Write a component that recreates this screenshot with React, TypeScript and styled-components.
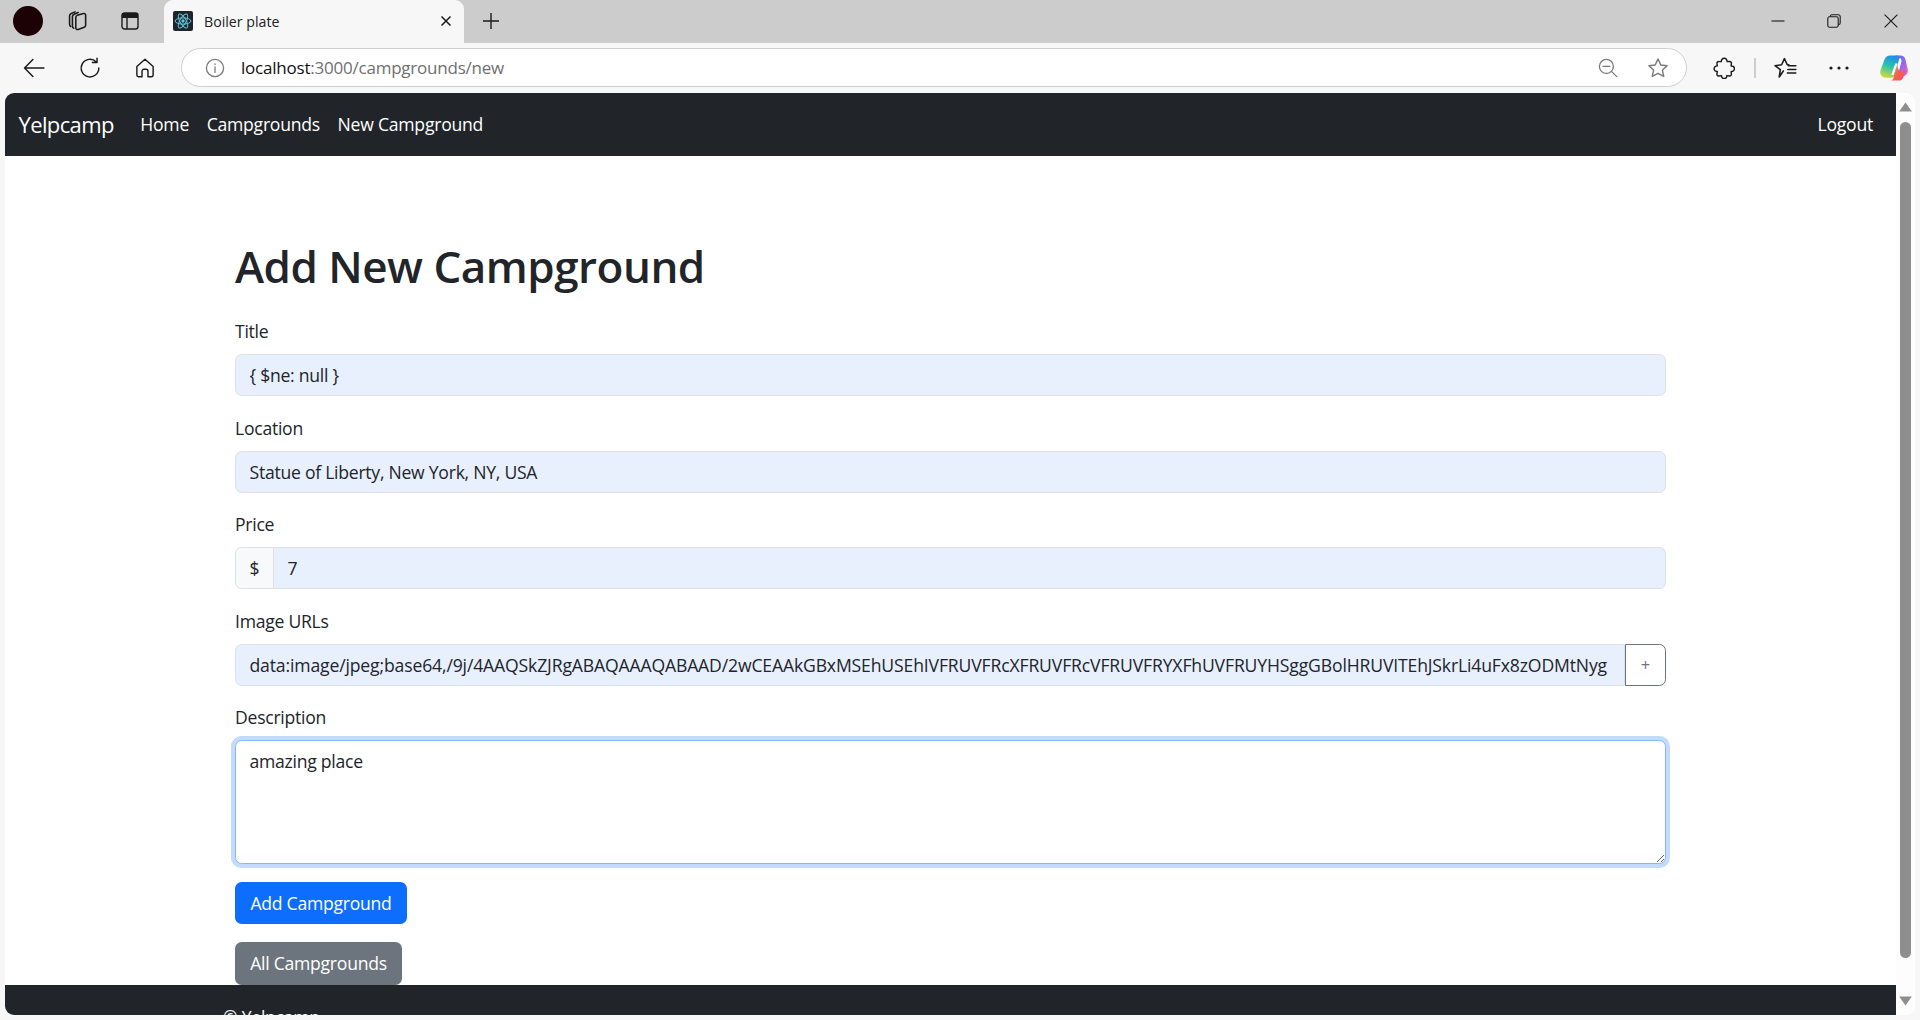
import React from "react";
import styled, { createGlobalStyle } from "styled-components";

const FONT = `"Open Sans", "Noto Sans", "Liberation Sans", sans-serif`;
const LONG_URL =
  "data:image/jpeg;base64,/9j/4AAQSkZJRgABAQAAAQABAAD/2wCEAAkGBxMSEhUSEhIVFRUVFRcXFRUVFRcVFRUVFRYXFhUVFRUYHSggGBolHRUVITEhJSkrLi4uFx8zODMtNyg";

const Global = createGlobalStyle`
  * { box-sizing: border-box; }
  html, body { margin: 0; padding: 0; height: 100%; overflow: hidden; background: #f7f7f7; }
  body { font-family: ${FONT}; }
  #root { height: 100%; }
`;

const Shell = styled.div`
  width: 1920px;
  height: 1020px;
  display: flex;
  flex-direction: column;
  background: #f7f7f7;
  overflow: hidden;
`;

const TabStrip = styled.div`
  height: 43px;
  flex: none;
  display: flex;
  align-items: stretch;
  padding: 0 0 0 2px;
  background: #cccccc;
`;

const Slot = styled.div<{ $w: number }>`
  width: ${(p) => p.$w}px;
  flex: none;
  display: flex;
  align-items: center;
  justify-content: center;
  color: #1a1a1a;
`;

const StripSlot = styled(Slot)`
  padding-bottom: 1px;
`;

const Avatar = styled.div`
  width: 30px;
  height: 30px;
  border-radius: 50%;
  background: #1c0205;
`;

const Tab = styled.div`
  width: 300px;
  margin-left: 4px;
  flex: none;
  display: flex;
  align-items: center;
  padding: 0 12px 1px 9px;
  background: #f7f7f7;
  border-radius: 9px 9px 0 0;
`;

const Favicon = styled.div`
  width: 20px;
  height: 20px;
  flex: none;
  display: flex;
  align-items: center;
  justify-content: center;
  background: #20232a;
  border-radius: 2px;
`;

const TabTitle = styled.span`
  margin-left: 11px;
  flex: 1;
  font-size: 14.2px;
  color: #222;
`;

const WindowControls = styled.div`
  margin-left: auto;
  display: flex;
`;

const Toolbar = styled.div`
  height: 50px;
  flex: none;
  display: flex;
  align-items: stretch;
  padding: 0 1px 0 7px;
  background: #f7f7f7;
`;

const UrlBar = styled.div`
  flex: 1;
  margin: 5px 13px 6px 9px;
  display: flex;
  align-items: center;
  padding: 0 17px 0 23px;
  background: #fff;
  border: 1px solid #cfcfcf;
  border-radius: 20px;
`;

const UrlText = styled.div`
  margin-left: 16px;
  flex: 1;
  font-size: 17px;
  letter-spacing: -0.22px;
  color: #6f6f6f;
  b { font-weight: 400; color: #111; }
`;

const UrlIcon = styled.div<{ $ml?: number }>`
  margin-left: ${(p) => p.$ml ?? 0}px;
  display: flex;
  color: #7a7a7a;
`;

const ToolbarSep = styled.div`
  width: 2px;
  height: 20px;
  margin: auto 5px auto 6px;
  background: #cdcdcd;
`;

const Viewport = styled.div`
  flex: 1;
  min-height: 0;
  margin: 0 5px 5px 5px;
  display: flex;
  border-radius: 9px;
  overflow: hidden;
  background: #fff;
`;

const Page = styled.div`
  flex: 1;
  min-width: 0;
  display: flex;
  flex-direction: column;
  overflow: hidden;
  background: #fff;
  color: #212529;
  font-size: 17.6px;
  line-height: 26.4px;
`;

const Navbar = styled.nav`
  height: 63px;
  flex: none;
  display: flex;
  align-items: center;
  padding: 0 23px 0 13.5px;
  background: #212529;
  color: #fff;
`;

const Brand = styled.a`
  font-size: 22px;
  margin-right: 26.5px;
  letter-spacing: -0.62px;
`;

const NavLink = styled.a<{ $right?: boolean }>`
  margin-left: ${(p) => (p.$right ? "auto" : "0")};
  margin-right: ${(p) => (p.$right ? "0" : "17.6px")};
  letter-spacing: -0.24px;
`;

const Main = styled.main`
  flex: none;
  padding: 84px 230px 0;
`;

const Heading = styled.h1`
  margin: 0 0 25px;
  font-size: 44px;
  line-height: 53px;
  font-weight: 600;
  letter-spacing: -0.5px;
`;

const Field = styled.div<{ $mb?: number }>`
  margin-bottom: ${(p) => p.$mb ?? 18.3}px;
`;

const Label = styled.label`
  display: block;
  margin-bottom: 9.8px;
  letter-spacing: -0.26px;
`;

const Input = styled.input`
  display: block;
  flex: 1;
  min-width: 0;
  width: 100%;
  height: 42px;
  padding: 0 13.5px;
  font: inherit;
  letter-spacing: -0.26px;
  color: #212529;
  background: #e8f0fe;
  border: 1px solid #dee2e6;
  border-radius: 6.6px;
  outline: none;
`;

const Group = styled.div`
  display: flex;
`;

const GroupText = styled.span`
  width: 39px;
  flex: none;
  display: flex;
  align-items: center;
  justify-content: center;
  background: #f8f9fa;
  border: 1px solid #dee2e6;
  border-radius: 6.6px 0 0 6.6px;
`;

const PriceInput = styled(Input)`
  border-left: 0;
  border-radius: 0 6.6px 6.6px 0;
`;

const UrlInput = styled(Input)`
  border-radius: 6.6px 0 0 6.6px;
  letter-spacing: -0.15px;
`;

const AddUrlButton = styled.button`
  width: 41px;
  flex: none;
  padding: 0;
  font-family: inherit;
  font-size: 16.5px;
  color: #6c757d;
  background: #fff;
  border: 1px solid #6c757d;
  border-radius: 0 6.6px 6.6px 0;
`;

const TextArea = styled.textarea`
  display: block;
  width: 100%;
  height: 124px;
  padding: 7px 13.5px;
  font: inherit;
  letter-spacing: -0.26px;
  color: #212529;
  background: #fff;
  border: 1px solid #86b7fe;
  border-radius: 6.6px;
  outline: none;
  box-shadow: 0 0 0 4px #c2dbfe;
  resize: vertical;
`;

const ButtonRow = styled.div<{ $gap: number }>`
  margin-bottom: ${(p) => p.$gap}px;
`;

const Button = styled.a<{ $bg: string; $h: number; $w: number }>`
  display: inline-flex;
  align-items: center;
  justify-content: center;
  width: ${(p) => p.$w}px;
  height: ${(p) => p.$h}px;
  color: #fff;
  background: ${(p) => p.$bg};
  border-radius: 6.6px;
  letter-spacing: -0.26px;
  vertical-align: top;
`;

const Footer = styled.footer`
  flex: 1;
  padding: 19px 0 0 218px;
  background: #212529;
  color: #f8f9fa;
  overflow: hidden;
  letter-spacing: -0.26px;
`;

const Scrollbar = styled.div`
  width: 19px;
  flex: none;
  display: flex;
  flex-direction: column;
  align-items: center;
  padding: 9px 4px 9px;
  background: #fdfdfd;
`;

const Thumb = styled.div`
  width: 11px;
  height: 836px;
  margin: 10px 0 auto;
  border-radius: 6px;
  background: #8e8e8e;
`;

const Stroke = {
  fill: "none",
  stroke: "currentColor",
  strokeWidth: 1.3,
  strokeLinecap: "round" as const,
  strokeLinejoin: "round" as const,
};

const Ico = ({ s = 20, children }: { s?: number; children: React.ReactNode }) => (
  <svg width={s} height={s} viewBox="0 0 20 20" {...Stroke}>
    {children}
  </svg>
);

const ReactLogo = () => (
  <svg width="18" height="18" viewBox="-12 -12 24 24" fill="none" stroke="#5ec8dc" strokeWidth="1.3">
    <circle r="2.2" fill="#5ec8dc" stroke="none" />
    <ellipse rx="10.5" ry="4.2" />
    <ellipse rx="10.5" ry="4.2" transform="rotate(60)" />
    <ellipse rx="10.5" ry="4.2" transform="rotate(120)" />
  </svg>
);

const CopilotLogo = () => (
  <svg width="30" height="30" viewBox="0 0 30 30">
    <defs>
      <linearGradient id="cpA" x1="0.6" y1="0" x2="0.3" y2="1">
        <stop offset="0" stopColor="#1e8ee8" />
        <stop offset="0.5" stopColor="#2cc6a8" />
        <stop offset="1" stopColor="#d6d83a" />
      </linearGradient>
      <linearGradient id="cpB" x1="0.1" y1="0" x2="0.9" y2="1">
        <stop offset="0" stopColor="#4a7cf0" />
        <stop offset="0.5" stopColor="#9a64ee" />
        <stop offset="1" stopColor="#e868cc" />
      </linearGradient>
      <linearGradient id="cpC" x1="0" y1="0" x2="1" y2="1">
        <stop offset="0" stopColor="#f8a63c" />
        <stop offset="0.5" stopColor="#f7603e" />
        <stop offset="1" stopColor="#ee4f8e" />
      </linearGradient>
    </defs>
    <path d="M11 2.500h7.500c1.500 0 2.300 1.300 1.900 2.700L15.800 22c-.5 1.700-1.800 2.700-3.400 2.700H6.500C2.600 24.700.4 21 1.500 17.300l3.700-10C6.200 4.200 8.300 2.500 11 2.500z" fill="url(#cpA)" />
    <path d="M16 2.500h5.500c2.500 0 4.200 1.500 4.900 3.800l2.200 9.500c1 4-1.400 7.500-5.400 7.500h-4.700l3.900-14.500c.6-2.200-.5-3.800-2.600-3.800z" fill="url(#cpB)" />
    <path d="M18.400 11.500 14.400 25.300c-.4 1.100-1.100 2.200-2.600 2.200h8.200c2.100 0 3.600-1.200 4.300-3.100l2.600-7.400c-.9.800-2.100 1.200-3.600 1.200h-1.300c-2 0-3.400-2.400-3.600-6.700z" fill="url(#cpC)" />
    <path d="M16.200 10.500h2.400l-4 11.500h-2.400z" fill="#fff" />
  </svg>
);

export default function App() {
  return (
    <Shell>
      <Global />
      <TabStrip>
        <StripSlot $w={52}>
          <Avatar />
        </StripSlot>
        <StripSlot $w={46}>
          <Ico s={24}>
            <path d="M8.400 2.400 5.200 3.700C4.200 4.100 3.800 4.700 3.800 5.600v7.100c0 1 .3 1.500 1 1.900" />
            <path d="M11 2.900 7.600 4.400C6.700 4.800 6.200 5.400 6.200 6.300v7.800c0 1 .4 1.500 1.100 1.900" />
            <path d="M10.200 5.300l5.200-1.500c1-.3 1.800.3 1.800 1.300v8.400c0 .9-.4 1.400-1.200 1.700l-5 1.800c-1.100.4-2-.2-2-1.300V7c0-.9.400-1.400 1.200-1.700z" />
          </Ico>
        </StripSlot>
        <StripSlot $w={60}>
          <svg width="18" height="18" viewBox="0 0 18 18" fill="none" stroke="#1a1a1a" strokeWidth="1.4">
            <rect x="1" y="1" width="16" height="16" rx="2.5" />
            <path d="M1.600 1.600h14.800v3.600H1.600z" fill="#1a1a1a" />
            <path d="M6 5v12" />
          </svg>
        </StripSlot>
        <Tab>
          <Favicon>
            <ReactLogo />
          </Favicon>
          <TabTitle>Boiler plate</TabTitle>
          <svg width="12" height="12" viewBox="0 0 12 12" fill="none" stroke="#1a1a1a" strokeWidth="1.5">
            <path d="M1.500 1.500l9 9M10.500 1.500l-9 9" />
          </svg>
        </Tab>
        <StripSlot $w={54}>
          <svg width="18" height="18" viewBox="0 0 18 18" fill="none" stroke="#1a1a1a" strokeWidth="1.4">
            <path d="M9 1v16M1 9h16" />
          </svg>
        </StripSlot>
        <WindowControls>
          <StripSlot $w={56}>
            <svg width="14" height="14" viewBox="0 0 14 14" fill="none" stroke="#1a1a1a" strokeWidth="1.1">
              <path d="M0.500 7h13" />
            </svg>
          </StripSlot>
          <StripSlot $w={56}>
            <svg width="14" height="14" viewBox="0 0 14 14" fill="none" stroke="#1a1a1a" strokeWidth="1.1">
              <rect x="0.800" y="2.800" width="10.400" height="10.400" rx="1.600" />
              <path d="M3.200 2.600C3.400 1.400 4 .8 5 .8h6.200c1.200 0 2 .8 2 2V9c0 1-.6 1.600-1.800 1.800" />
            </svg>
          </StripSlot>
          <StripSlot $w={58}>
            <svg width="14" height="14" viewBox="0 0 14 14" fill="none" stroke="#1a1a1a" strokeWidth="1.1">
              <path d="M.6.6l12.800 12.800M13.400.6.6 13.400" />
            </svg>
          </StripSlot>
        </WindowControls>
      </TabStrip>

      <Toolbar>
        <Slot $w={54}>
          <Ico s={22}>
            <path d="M19 10H1.400M9 2.200 1.400 10 9 17.800" />
          </Ico>
        </Slot>
        <Slot $w={57}>
          <Ico s={22}>
            <path d="M15.700 4.500A8 8 0 1 0 18 10M16.400 1v4h-4.200" />
          </Ico>
        </Slot>
        <Slot $w={54}>
          <Ico s={22}>
            <path d="M2.600 8.600 10 2l7.400 6.600v7.600c0 1-.7 1.800-1.800 1.800h-2.900v-5c0-1-.7-1.900-1.700-1.900H9c-1 0-1.700.9-1.700 1.900v5H4.400c-1.100 0-1.800-.8-1.800-1.800z" />
          </Ico>
        </Slot>
        <UrlBar>
          <UrlIcon>
            <Ico s={20}>
              <circle cx="10" cy="10" r="8.600" />
              <path d="M10 9v5.400M10 5.800v.6" />
            </Ico>
          </UrlIcon>
          <UrlText>
            <b>localhost</b>:3000/campgrounds/new
          </UrlText>
          <UrlIcon>
            <Ico s={20}>
              <circle cx="8.400" cy="8.400" r="7" />
              <path d="M5 8.400h6.800M13.400 13.400l5.400 5.200" />
            </Ico>
          </UrlIcon>
          <UrlIcon $ml={29}>
            <Ico s={22}>
              <path d="M10 1.800l2.500 5.400 5.800.7-4.300 4 1.200 5.800L10 14.800l-5.200 2.900L6 11.900l-4.300-4 5.800-.7z" />
            </Ico>
          </UrlIcon>
        </UrlBar>
        <Slot $w={48}>
          <Ico s={22}>
            <path d="M7.600 4.200C7.400 2.400 8.600 1.200 10.200 1.200s2.700 1.200 2.600 3l2.300-.2c1 0 1.700.8 1.600 1.800l-.2 2.400c1.800-.2 3 .9 3 2.400s-1.200 2.700-3 2.600l.2 2.200c.1 1.100-.7 1.900-1.700 1.800l-2.400-.3c.1 1.700-.9 2.700-2.400 2.700s-2.600-1-2.500-2.700l-2.500.3c-1 .1-1.700-.7-1.600-1.800l.3-2.300c-1.800.2-2.900-.9-2.900-2.400s1.100-2.700 2.900-2.600L3.600 5.900C3.500 4.900 4.200 4 5.200 4.100z" />
          </Ico>
        </Slot>
        <ToolbarSep />
        <Slot $w={48}>
          <Ico s={24}>
            <path d="M8.600 12.500 5.200 17.500l.9-6.100-4.400-3.300 5.500-.8L9.500 2.200l2.400 5.100h1.300" />
            <path d="M12.800 8.200H19M12.400 11.200H19M12 14.200h7" />
          </Ico>
        </Slot>
        <Slot $w={59}>
          <svg width="24" height="6" viewBox="0 0 24 6" fill="#1a1a1a">
            <circle cx="4" cy="3" r="1.600" />
            <circle cx="12" cy="3" r="1.600" />
            <circle cx="20" cy="3" r="1.600" />
          </svg>
        </Slot>
        <Slot $w={51}>
          <CopilotLogo />
        </Slot>
      </Toolbar>

      <Viewport>
        <Page>
          <Navbar>
            <Brand>Yelpcamp</Brand>
            <NavLink>Home</NavLink>
            <NavLink>Campgrounds</NavLink>
            <NavLink>New Campground</NavLink>
            <NavLink $right>Logout</NavLink>
          </Navbar>
          <Main>
            <Heading>Add New Campground</Heading>
            <Field>
              <Label>Title</Label>
              <Input readOnly value="{ $ne: null }" />
            </Field>
            <Field>
              <Label>Location</Label>
              <Input readOnly value="Statue of Liberty, New York, NY, USA" />
            </Field>
            <Field>
              <Label>Price</Label>
              <Group>
                <GroupText>$</GroupText>
                <PriceInput readOnly value="7" />
              </Group>
            </Field>
            <Field>
              <Label>Image URLs</Label>
              <Group>
                <UrlInput readOnly value={LONG_URL} />
                <AddUrlButton>+</AddUrlButton>
              </Group>
            </Field>
            <Field $mb={17.8}>
              <Label>Description</Label>
              <TextArea readOnly value="amazing place" />
            </Field>
            <ButtonRow $gap={18}>
              <Button $bg="#0d6efd" $h={42} $w={172}>
                Add Campground
              </Button>
            </ButtonRow>
            <ButtonRow $gap={0}>
              <Button $bg="#6c757d" $h={43} $w={167}>
                All Campgrounds
              </Button>
            </ButtonRow>
          </Main>
          <Footer>© Yelpcamp</Footer>
        </Page>
        <Scrollbar>
          <svg width="13" height="10" viewBox="0 0 13 10" fill="#8e8e8e">
            <path d="M6.500 0.500 12.800 9.500H0.200z" />
          </svg>
          <Thumb />
          <svg width="13" height="10" viewBox="0 0 13 10" fill="#8e8e8e">
            <path d="M6.500 9.500 12.800 0.500H0.200z" />
          </svg>
        </Scrollbar>
      </Viewport>
    </Shell>
  );
}
